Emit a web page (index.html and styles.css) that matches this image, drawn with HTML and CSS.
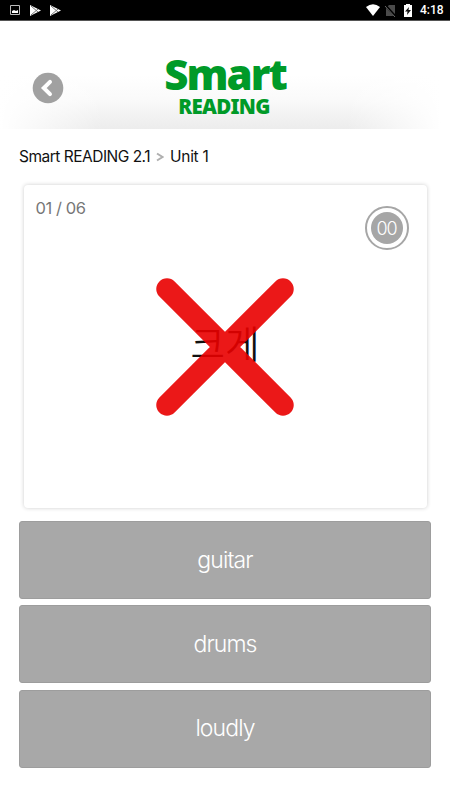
FILE: index.html
```html
<!DOCTYPE html>
<html lang="ko">
<head>
  <meta charset="UTF-8">
  <title>Smart READING</title>
  <meta name="viewport" content="width=device-width, initial-scale=1.0">
  <link rel="stylesheet" href="styles.css">
</head>
<body>
  <div class="statusbar">
    <svg class="notices" width="64" height="20" viewBox="0 0 64 20">
      <path d="M10.500 5.500h9v9h-9z" fill="none" stroke="#bbb"/>
      <path d="M12 13v-2l2-1 2 1 2-1v3z" fill="#fff"/>
      <g id="play">
        <path d="M30 5v11l11-5.500z" fill="#fff"/>
        <path d="M31 6l7 6M31 15l7-6" stroke="#777" fill="none"/>
      </g>
      <use href="#play" x="20"/>
    </svg>
    <div class="system">
      <svg width="50" height="20" viewBox="0 0 50 20">
        <path d="M1 7Q8 1.500 15 7L8 16z" fill="#fff"/>
        <path d="M24 5h6v11h-9V8z" fill="#4b4b4b"/>
        <path d="M20 5l11 12" stroke="#000" stroke-width="2.500"/>
        <path d="M20 6l10 11" stroke="#666"/>
        <path d="M39 5h2V4h4v1h2v12h-8z" fill="#fff"/>
        <path d="M44 7l-4 4.500h2.500L42 15l4-5h-2.500z" fill="#111"/>
      </svg>
      <span class="time">4:18</span>
    </div>
  </div>

  <header class="header">
    <svg class="back" width="32" height="32" viewBox="0 0 32 32">
      <circle cx="16" cy="16" r="15.300" fill="#a1a1a1"/>
      <path d="M18 9.800L11.800 16 18 22.200" fill="none" stroke="#fff" stroke-width="4" stroke-linecap="round"/>
    </svg>
    <h1 class="logo">
      <span class="logo-top">Smart</span>
      <span class="logo-bottom">READING</span>
    </h1>
  </header>

  <nav class="crumbs">
    <span class="course">Smart READING 2.1</span>
    <svg width="8" height="10" viewBox="0 0 8 10"><path d="M1 1.500L6.500 5 1 8.500" fill="none" stroke="#b0b0b0" stroke-width="2"/></svg>
    <span class="unit">Unit 1</span>
  </nav>

  <main class="quiz">
    <section class="card">
      <div class="count">01 / 06</div>
      <div class="timer"><span>00</span></div>
      <div class="word">크게</div>
      <svg class="wrong" width="138" height="138" viewBox="0 0 138 138">
        <path d="M11 11L127 127M127 11L11 127" stroke="#e90000" stroke-width="21.500" stroke-linecap="round"/>
      </svg>
    </section>
    <button class="answer">guitar</button>
    <button class="answer">drums</button>
    <button class="answer">loudly</button>
  </main>
</body>
</html>
```

FILE: styles.css
```css
* { box-sizing: border-box; }
body { margin: 0; height: 800px; overflow: hidden; background: #fff; font-family: Inter, "Noto Sans CJK KR", sans-serif; }
svg { display: block; }

.statusbar { display: flex; justify-content: space-between; height: 21px; background: #000; border-bottom: 1px solid #555; }
.system { display: flex; width: 85px; }
.time { margin-left: 5px; color: #fff; font: 500 12px/21px Roboto, sans-serif; white-space: nowrap; }

.header { position: relative; height: 108px; padding-top: 32px; background: linear-gradient(90deg, #fff 0%, rgba(255,255,255,0) 23%, rgba(255,255,255,0) 77%, #fff 98%), linear-gradient(#fff 50%, #fafafa 72%, #ececec); }
.back { position: absolute; left: 32px; top: 51px; }
.logo { display: flex; flex-direction: column; align-items: center; margin: 0; color: #009a28; font-family: "Noto Sans", sans-serif; font-weight: 900; }
.logo-top { font-size: 42px; line-height: 42px; letter-spacing: -2px; }
.logo-bottom { font-size: 20.5px; line-height: 22px; letter-spacing: -0.7px; margin-right: 2px; }

.crumbs { display: flex; align-items: center; height: 54px; padding-left: 19px; color: #111; font-size: 15.5px; letter-spacing: -0.5px; }
.crumbs svg { margin: 2px 5px 0 6px; }
.unit { margin-left: 1px; letter-spacing: -0.3px; }

.quiz { padding: 2px 19px 0; }
.card { position: relative; display: flex; align-items: center; justify-content: center; height: 323px; margin: 0 4.5px 13px; padding-bottom: 9px; background: #fff; border-radius: 4px; box-shadow: 0 0 4px rgba(0,0,0,.2); }
.count { position: absolute; left: 12px; top: 13px; color: #777; font-size: 16.5px; line-height: 20px; letter-spacing: -0.4px; }
.timer { position: absolute; right: 18px; top: 21px; width: 44px; height: 44px; padding: 4px; border: 2px solid #a6a6a6; border-radius: 50%; }
.timer span { display: block; width: 32px; height: 32px; margin: 0 auto; border-radius: 50%; background: #a6a6a6; color: #fff; font-size: 18px; font-weight: 300; line-height: 33px; letter-spacing: -1px; text-align: center; }
.word { color: #111; font-family: "Noto Sans CJK KR", sans-serif; font-size: 37.5px; font-weight: 350; line-height: 44px; }
.wrong { position: absolute; left: 132px; top: 93px; opacity: .9; }

.answer { display: block; width: 100%; height: 78px; margin: 0 0 6.3px; padding: 0 0 1px; border: 1px solid #9d9d9d; border-radius: 3px; background: #a8a8a8; color: #fff; font-family: inherit; font-size: 23px; font-weight: 300; letter-spacing: -0.9px; }
```
